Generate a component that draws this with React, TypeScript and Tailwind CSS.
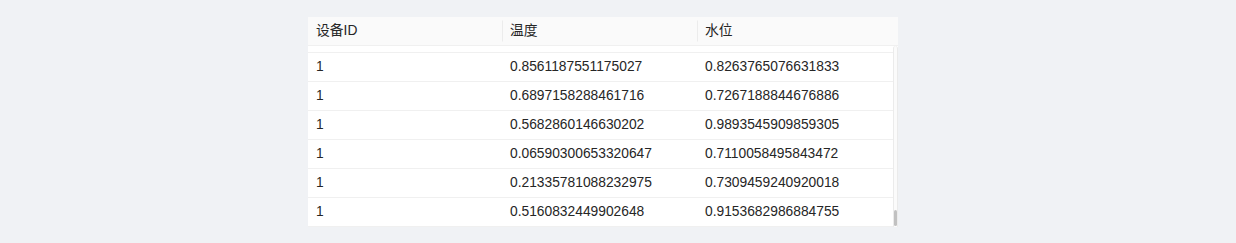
import React from 'react';

const ROWS: { id: number; temp: string; level: string }[] = [
  { id: 1, temp: '0.8561187551175027', level: '0.8263765076631833' },
  { id: 1, temp: '0.6897158288461716', level: '0.7267188844676886' },
  { id: 1, temp: '0.5682860146630202', level: '0.9893545909859305' },
  { id: 1, temp: '0.06590300653320647', level: '0.7110058495843472' },
  { id: 1, temp: '0.21335781088232975', level: '0.7309459240920018' },
  { id: 1, temp: '0.5160832449902648', level: '0.9153682986884755' },
];

const HEADERS = ['设备ID', '温度', '水位'];

const App: React.FC = () => {
  return (
    <div
      className="min-h-[243px] w-full bg-[#f0f2f5] pl-[308px] pt-[17px] text-[13.8px] text-[#262626]"
      style={{ fontFamily: '"Liberation Sans", "Noto Sans CJK SC", sans-serif' }}
    >
      <div className="w-[590px] bg-white">
        {/* Header */}
        <div className="grid grid-cols-[194px_195px_195px_6px] bg-[#fafafa] border-b border-[#f0f0f0]">
          {HEADERS.map((h, i) => (
            <div key={h} className="relative flex h-[28px] items-center px-2">
              {i > 0 && (
                <span className="absolute left-0 top-1/2 h-[21px] w-px -translate-y-1/2 bg-[#ececec]" />
              )}
              {h}
            </div>
          ))}
          <div />
        </div>

        {/* Body */}
        <div className="flex h-[181px] overflow-hidden">
          <div className="w-[585px]">
            <div className="h-[7px] border-b border-[#f0f0f0]" />
            {ROWS.map((r, i) => (
              <div
                key={i}
                className="grid h-[29px] grid-cols-[194px_195px_196px] items-center border-b border-[#f0f0f0]"
              >
                <div className="px-2">{r.id}</div>
                <div className="px-2">{r.temp}</div>
                <div className="px-2">{r.level}</div>
              </div>
            ))}
          </div>
          <div className="flex w-[5px] flex-col justify-end rounded-t-sm border-x border-[#ebebeb] bg-[#fbfbfb]">
            <div className="mb-[1px] h-[16px] w-full rounded-sm bg-[#c1c1c1]" />
          </div>
        </div>
      </div>
    </div>
  );
};

export default App;
